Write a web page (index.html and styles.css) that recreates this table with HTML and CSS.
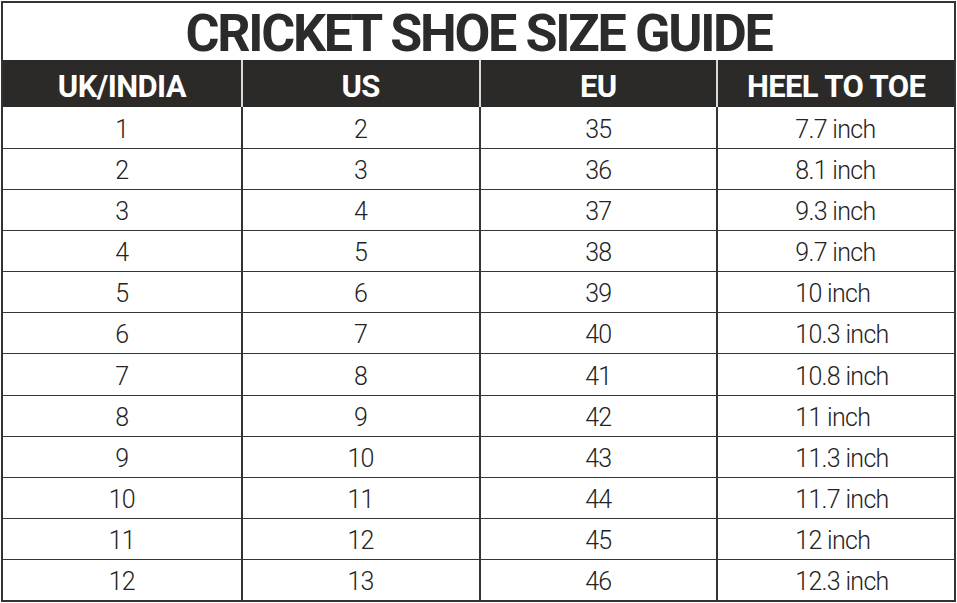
FILE: index.html
```html
<!DOCTYPE html>
<html lang="en">
<head>
<meta charset="utf-8">
<title>Cricket Shoe Size Guide</title>
<link rel="stylesheet" href="styles.css">
</head>
<body>
<div class="frame">
  <div class="title">CRICKET SHOE SIZE GUIDE</div>
  <div class="sheet">
    <div class="hcell">UK/INDIA</div>
    <div class="hcell sep">US</div>
    <div class="hcell sep">EU</div>
    <div class="hcell sep">HEEL TO TOE</div>

    <div class="cell">1</div><div class="cell sep">2</div><div class="cell sep">35</div><div class="cell sep len">7.7 inch</div>
    <div class="cell">2</div><div class="cell sep">3</div><div class="cell sep">36</div><div class="cell sep len">8.1 inch</div>
    <div class="cell">3</div><div class="cell sep">4</div><div class="cell sep">37</div><div class="cell sep len">9.3 inch</div>
    <div class="cell">4</div><div class="cell sep">5</div><div class="cell sep">38</div><div class="cell sep len">9.7 inch</div>
    <div class="cell">5</div><div class="cell sep">6</div><div class="cell sep">39</div><div class="cell sep len">10 inch</div>
    <div class="cell">6</div><div class="cell sep">7</div><div class="cell sep">40</div><div class="cell sep len">10.3 inch</div>
    <div class="cell">7</div><div class="cell sep">8</div><div class="cell sep">41</div><div class="cell sep len">10.8 inch</div>
    <div class="cell">8</div><div class="cell sep">9</div><div class="cell sep">42</div><div class="cell sep len">11 inch</div>
    <div class="cell">9</div><div class="cell sep">10</div><div class="cell sep">43</div><div class="cell sep len">11.3 inch</div>
    <div class="cell">10</div><div class="cell sep">11</div><div class="cell sep">44</div><div class="cell sep len">11.7 inch</div>
    <div class="cell">11</div><div class="cell sep">12</div><div class="cell sep">45</div><div class="cell sep len">12 inch</div>
    <div class="cell">12</div><div class="cell sep">13</div><div class="cell sep">46</div><div class="cell sep len">12.3 inch</div>
  </div>
</div>
</body>
</html>
```
FILE: styles.css
```css
html, body {
  margin: 0;
  padding: 0;
  background: #ffffff;
}

.frame {
  margin: 1px 0 0 1px;
  width: 955px;
  height: 601px;
  box-sizing: border-box;
  border: 2px solid #333333;
  display: flex;
  flex-direction: column;
  font-family: Roboto, "Liberation Sans", sans-serif;
  color: #232323;
}

.title {
  height: 57px;
  box-sizing: border-box;
  padding-top: 4px;
  display: flex;
  align-items: center;
  justify-content: center;
  font-size: 52px;
  font-weight: 700;
  letter-spacing: -2.3px;
  color: #2b2b2b;
}

.sheet {
  flex: 1;
  display: grid;
  grid-template-columns: repeat(4, 1fr);
  grid-template-rows: 47px repeat(12, 1fr);
}

.hcell {
  background: #2b2a28;
  color: #ffffff;
  display: flex;
  align-items: center;
  justify-content: center;
  box-sizing: border-box;
  padding-top: 5px;
  font-size: 31px;
  font-weight: 700;
  letter-spacing: -0.6px;
}

.hcell.sep {
  border-left: 2px solid #d9d9d9;
}

.cell {
  display: flex;
  align-items: center;
  justify-content: center;
  box-sizing: border-box;
  padding-top: 3px;
  border-top: 1.5px solid #363636;
  font-size: 25px;
  font-weight: 300;
  letter-spacing: -0.7px;
}

.sheet > .hcell ~ .cell:nth-child(-n+8) {
  border-top: none;
}

.cell.sep {
  border-left: 2px solid #333333;
}

.cell.len {
  justify-content: flex-start;
  padding-left: 77px;
}
```
